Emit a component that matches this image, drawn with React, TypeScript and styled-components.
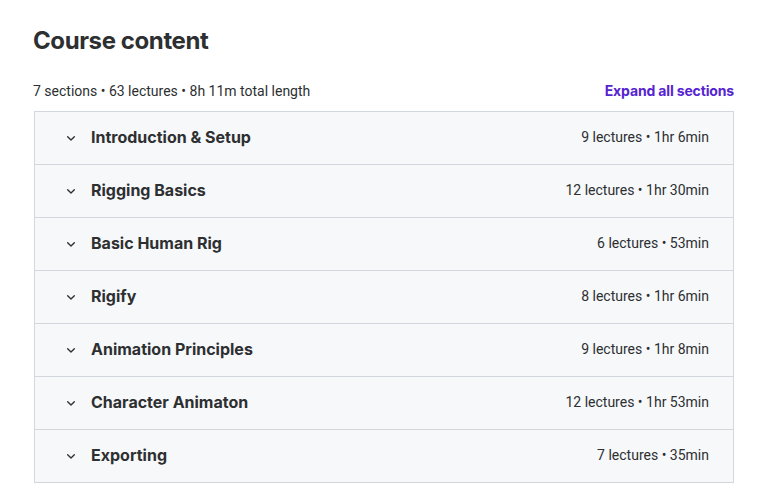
import React from "react";
import styled, { createGlobalStyle } from "styled-components";

const GlobalStyle = createGlobalStyle`
  body {
    margin: 0;
    background: #ffffff;
    font-family: "Roboto", "Liberation Sans", sans-serif;
    color: #2d2f31;
  }
`;

const Page = styled.div`
  padding: 26px 28px 0 33px;
  width: 701px;
`;

const Title = styled.h2`
  margin: 0 0 25px 0;
  font-family: "Inter", "Roboto", sans-serif;
  font-size: 24px;
  font-weight: 700;
  line-height: 30px;
  letter-spacing: -0.4px;
`;

const Summary = styled.div`
  display: flex;
  justify-content: space-between;
  align-items: center;
  height: 20px;
  padding: 0 0 10px 0;
  font-size: 14px;
  line-height: 20px;
`;

const ExpandButton = styled.button`
  border: 0;
  background: none;
  padding: 0;
  font-family: "Inter", "Roboto", sans-serif;
  font-size: 14px;
  line-height: 20px;
  font-weight: 700;
  letter-spacing: -0.15px;
  color: #5624d0;
  cursor: pointer;
`;

const Sections = styled.div`
  margin-left: 1px;
  border: 1px solid #d1d7dc;
  border-bottom: 0;
`;

const SectionRow = styled.div`
  display: flex;
  align-items: center;
  box-sizing: border-box;
  height: 53px;
  padding: 0 24px 2px 28px;
  line-height: 20px;
  background: #f7f8fa;
  border-bottom: 1px solid #d1d7dc;
`;

const Chevron = styled.svg`
  width: 16px;
  height: 16px;
  margin-right: 12px;
  margin-top: 1px;
  color: #2d2f31;
`;

const SectionTitle = styled.span`
  flex: 1;
  font-family: "Inter", "Roboto", sans-serif;
  font-size: 16px;
  font-weight: 700;
`;

const SectionMeta = styled.span`
  font-size: 14px;
`;

const sections = [
  { title: "Introduction & Setup", meta: "9 lectures • 1hr 6min" },
  { title: "Rigging Basics", meta: "12 lectures • 1hr 30min" },
  { title: "Basic Human Rig", meta: "6 lectures • 53min" },
  { title: "Rigify", meta: "8 lectures • 1hr 6min" },
  { title: "Animation Principles", meta: "9 lectures • 1hr 8min" },
  { title: "Character Animaton", meta: "12 lectures • 1hr 53min" },
  { title: "Exporting", meta: "7 lectures • 35min" },
];

export default function App() {
  return (
    <>
      <GlobalStyle />
      <Page>
        <Title>Course content</Title>
        <Summary>
          <span>7 sections • 63 lectures • 8h 11m total length</span>
          <ExpandButton type="button">Expand all sections</ExpandButton>
        </Summary>
        <Sections>
          {sections.map((s) => (
            <SectionRow key={s.title}>
              <Chevron viewBox="0 0 24 24" fill="none" stroke="currentColor" strokeWidth={2} strokeLinecap="round" strokeLinejoin="round">
                <path d="M7 10l5 5 5-5" />
              </Chevron>
              <SectionTitle>{s.title}</SectionTitle>
              <SectionMeta>{s.meta}</SectionMeta>
            </SectionRow>
          ))}
        </Sections>
      </Page>
    </>
  );
}
